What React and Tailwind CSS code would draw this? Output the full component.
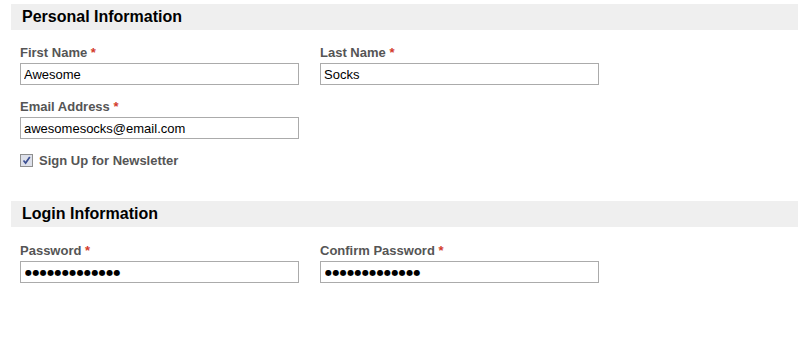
import React from "react";

function Field({ label, value, masked = false }) {
    return (
        <div className="flex flex-col">
            <label className="mb-[3px] text-[13px] font-bold leading-[15px] text-[#555]">
                {label} <span className="text-[#d33b2c]">*</span>
            </label>
            {masked ? (
                <input
                    type="text"
                    defaultValue={value}
                    readOnly
                    aria-label={label}
                    className="h-[22px] w-[279px] border border-[#ababab] bg-white px-[4px] font-['DejaVu_Sans',sans-serif] text-[8px] tracking-[0.4px] text-black outline-none"
                />
            ) : (
                <input
                    type="text"
                    defaultValue={value}
                    readOnly
                    className="h-[22px] w-[279px] border border-[#ababab] bg-white px-[3px] text-[13px] text-black outline-none"
                />
            )}
        </div>
    );
}

function SectionHeader({ children }) {
    return (
        <h2 className="ml-[11px] h-[26px] bg-[#efefef] pl-[11px] text-[16px] font-bold leading-[25px] text-black">
            {children}
        </h2>
    );
}

export default function App() {
    return (
        <div className="h-[346px] w-[798px] bg-white pt-[4px] font-['Arial','Liberation_Sans',sans-serif]">
            <section>
                <SectionHeader>Personal Information</SectionHeader>
                <div className="px-[20px] pt-[15px]">
                    <div className="grid grid-cols-[300px_279px] gap-y-[14px]">
                        <Field label="First Name" value="Awesome" />
                        <Field label="Last Name" value="Socks" />
                        <Field label="Email Address" value="awesomesocks@email.com" />
                    </div>
                    <div className="mt-[15px] flex h-[13px] items-center gap-[6px]">
                        <span className="flex h-[13px] w-[13px] items-center justify-center border border-[#8e8f8f] bg-[#dde0ea]">
                            <svg width="9" height="9" viewBox="0 0 9 9">
                                <path d="M1.5 4.5 L3.6 7 L7.8 1" fill="none" stroke="#3b4f92" strokeWidth="1.7" />
                            </svg>
                        </span>
                        <span className="text-[13px] font-bold leading-[13px] text-[#555]">Sign Up for Newsletter</span>
                    </div>
                </div>
            </section>
            <section className="mt-[34px]">
                <SectionHeader>Login Information</SectionHeader>
                <div className="px-[20px] pt-[16px]">
                    <div className="grid grid-cols-[300px_279px]">
                        <Field label="Password" value="●●●●●●●●●●●●●" masked />
                        <Field label="Confirm Password" value="●●●●●●●●●●●●●" masked />
                    </div>
                </div>
            </section>
        </div>
    );
}
